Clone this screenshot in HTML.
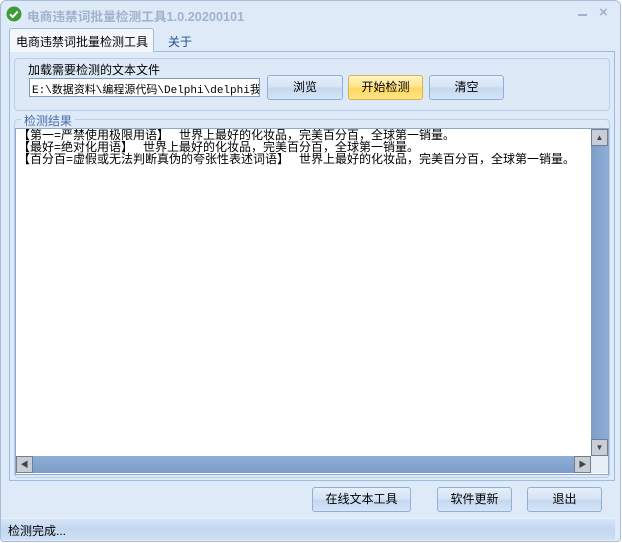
<!DOCTYPE html><html><head><meta charset="utf-8"><style>
*{margin:0;padding:0;box-sizing:border-box}
body{width:622px;height:543px;background:#fff;font:12px "Liberation Sans","Noto Sans CJK SC",sans-serif;position:relative;overflow:hidden}
.win{position:absolute;left:0;top:0;width:621px;height:542px;background:#dfeaf8;border:1px solid #a9bdd6;border-radius:6px 6px 4px 4px}
.a{position:absolute;white-space:nowrap}
.btn{position:absolute;border:1px solid #8eb0d8;border-radius:3px;background:linear-gradient(#e6effa,#d5e3f5 50%,#c4d7ef 51%,#d6e4f6);text-align:center;color:#000;font-size:12px}
.grp{position:absolute;border:1px solid #b9cfe9;border-radius:4px;background:#dde9f7}
.sb{position:absolute;width:17px;height:17px;background:#c9ced6;border:1px solid #6e7e93;font-size:8px;text-align:center;color:#444;line-height:15px}
</style></head><body><div class="win">
<svg class="a" style="left:5px;top:5px" width="16" height="16"><circle cx="8" cy="8" r="7.5" fill="#3f9b3a"/><path d="M4 8.3l2.7 2.7 5-5.5" stroke="#fff" stroke-width="2" fill="none"/></svg>
<div class="a" style="left:26px;top:5px;font-weight:bold;font-size:12.7px;color:#9fb3cc">电商违禁词批量检测工具1.0.20200101</div>
<div class="a" style="left:577px;top:13px;width:9px;height:2px;background:#9fb3cc"></div>
<div class="a" style="left:598px;top:3px;font-size:15px;font-weight:bold;color:#9fb3cc">×</div>
<div class="a" style="left:8px;top:50px;width:606px;height:430px;border:1px solid #9ebbe0;background:#dfeaf8"></div>
<div class="a" style="left:8px;top:27px;width:145px;height:24px;border:1px solid #9ebbe0;border-bottom:none;border-radius:3px 3px 0 0;background:#f3f7fc;font-size:12px;padding:4px 0 0 6px">电商违禁词批量检测工具</div>
<div class="a" style="left:167px;top:32px;font-size:12px;color:#1f4b8a">关于</div>
<div class="grp" style="left:13px;top:57px;width:596px;height:53px"></div>
<div class="a" style="left:27px;top:60px;font-size:12px">加载需要检测的文本文件</div>
<div class="a" style="left:28px;top:77px;width:231px;height:19px;background:#fff;border:1px solid #7c9cc4;font:11px 'Liberation Mono','Noto Sans CJK SC',monospace;padding:2px 0 0 2px;overflow:hidden">E:\数据资料\编程源代码\Delphi\delphi我</div>
<div class="btn" style="left:266px;top:74px;width:76px;height:25px;line-height:23px">浏览</div>
<div class="btn" style="left:347px;top:74px;width:75px;height:25px;line-height:23px;background:linear-gradient(#fff3c0,#ffe48a 50%,#ffd65a 51%,#ffe48c);border-color:#d6b24c">开始检测</div>
<div class="btn" style="left:428px;top:74px;width:75px;height:25px;line-height:23px">清空</div>
<div class="grp" style="left:13px;top:118px;width:596px;height:359px"></div>
<div class="a" style="left:20px;top:111px;background:#dfeaf8;padding:0 3px;font-size:12px;color:#4a6ea8">检测结果</div>
<div class="a" style="left:14px;top:127px;width:594px;height:347px;background:#fff;border:1px solid #8fa9cc"></div>
<div class="a" style="left:17px;top:128px;width:572px;overflow:hidden;font-size:12px;line-height:12px;white-space:pre;letter-spacing:0">【第一=严禁使用极限用语】   世界上最好的化妆品，完美百分百，全球第一销量。
【最好=绝对化用语】   世界上最好的化妆品，完美百分百，全球第一销量。
【百分百=虚假或无法判断真伪的夸张性表述词语】   世界上最好的化妆品，完美百分百，全球第一销量。</div>
<div class="a" style="left:590px;top:128px;width:17px;height:327px;background:linear-gradient(90deg,#7b9dc9,#8eaed6)"></div>
<div class="sb" style="left:590px;top:128px">▲</div>
<div class="sb" style="left:590px;top:438px">▼</div>
<div class="a" style="left:15px;top:455px;width:575px;height:17px;background:linear-gradient(#8eaed6,#7b9dc9)"></div>
<div class="sb" style="left:15px;top:455px">◀</div>
<div class="sb" style="left:573px;top:455px">▶</div>
<div class="a" style="left:590px;top:455px;width:17px;height:17px;background:#e8eef7"></div>
<div class="btn" style="left:311px;top:486px;width:99px;height:25px;line-height:23px">在线文本工具</div>
<div class="btn" style="left:436px;top:486px;width:75px;height:25px;line-height:23px">软件更新</div>
<div class="btn" style="left:526px;top:486px;width:75px;height:25px;line-height:23px">退出</div>
<div class="a" style="left:0;top:517px;width:614px;height:22px;background:linear-gradient(#d6e4f6,#c3d7f0 50%,#cfe0f5);border-top:1px solid #e8f0fa"></div>
<div class="a" style="left:7px;top:521px;font-size:12px">检测完成...</div>
</div></body></html>
